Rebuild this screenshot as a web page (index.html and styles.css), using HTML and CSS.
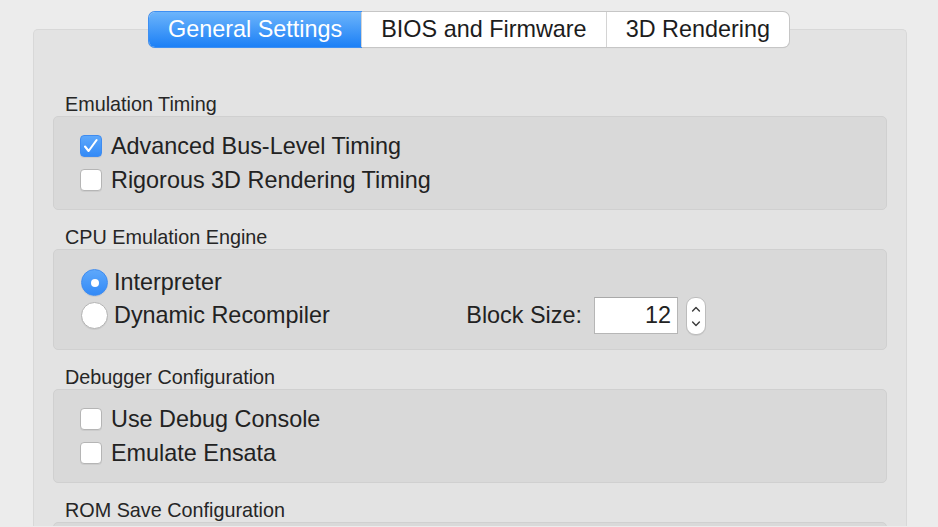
FILE: index.html
```html
<!DOCTYPE html>
<html lang="en">
<head>
    <meta charset="UTF-8">
    <meta name="viewport" content="width=device-width, initial-scale=1.0">
    <title>Emulator Settings</title>
    <link rel="stylesheet" href="styles.css">
</head>
<body>
<div class="tabs">
    <span class="tab selected">General Settings</span>
    <span class="tab">BIOS and Firmware</span>
    <span class="tab">3D Rendering</span>
</div>

<div class="panel">
    <div class="group-title">Emulation Timing</div>
    <div class="group">
        <div class="row">
            <span class="check on">
                <svg width="20" height="20" viewBox="0 0 20 20"><path d="M4 10.5 L7.6 15 L15.6 4" fill="none" stroke="#fff" stroke-width="2.1" stroke-linecap="round" stroke-linejoin="round"/></svg>
            </span>
            Advanced Bus-Level Timing
        </div>
        <div class="row"><span class="check"></span>Rigorous 3D Rendering Timing</div>
    </div>

    <div class="group-title">CPU Emulation Engine</div>
    <div class="group cpu">
        <div class="row short"><span class="radio on"></span>Interpreter</div>
        <div class="row short">
            <span class="radio"></span>Dynamic Recompiler
            <div class="block-size">
                <span class="block-label">Block Size:</span>
                <span class="number-field">12</span>
                <span class="stepper">
                    <svg width="18" height="36" viewBox="0 0 18 36"><path d="M5.6 13 L9 9.6 L12.4 13 M5.6 24 L9 27.4 L12.4 24" fill="none" stroke="#3a3a3a" stroke-width="1.4" stroke-linecap="round" stroke-linejoin="round"/></svg>
                </span>
            </div>
        </div>
    </div>

    <div class="group-title">Debugger Configuration</div>
    <div class="group">
        <div class="row"><span class="check"></span>Use Debug Console</div>
        <div class="row"><span class="check"></span>Emulate Ensata</div>
    </div>

    <div class="group-title">ROM Save Configuration</div>
    <div class="group rom"></div>
</div>
</body>
</html>
```

FILE: styles.css
```css
body {
    margin: 0;
    height: 527px;
    overflow: hidden;
    background-color: #ececec;
    font-family: "Liberation Sans", Arial, sans-serif;
    color: #222;
}
.tabs {
    position: relative;
    z-index: 1;
    display: flex;
    width: max-content;
    height: 35px;
    margin: 12px auto 0;
    background-color: #fff;
    border-radius: 6px;
    box-shadow: 0 0 0 1px #c6c6c6, 0 1px 1px rgba(0, 0, 0, 0.12);
}
.tab {
    padding: 0 19px;
    font-size: 23.4px;
    line-height: 35px;
    color: #1c1c1c;
    border-left: 1px solid #d4d4d4;
}
.tab:first-child {
    border-left: none;
}
.tab.selected {
    color: #fff;
    background: linear-gradient(#6cb4fb, #1c80f6);
    border-radius: 6px 0 0 6px;
    box-shadow: 0 0 0 1px #3d8ff3;
}
.panel {
    height: 434px;
    overflow: hidden;
    margin: -18px 31px 0 33px;
    padding: 62px 19px 0;
    background-color: #e3e3e3;
    border: 1px solid #d8d8d8;
    border-bottom: none;
    border-radius: 5px 5px 0 0;
}
.group-title {
    padding-left: 12px;
    font-size: 19.8px;
    line-height: 24px;
    color: #262626;
}
.group {
    margin-bottom: 15px;
    padding: 12px 0 12px 26px;
    background-color: #d9d9d9;
    border: 1px solid #d0d0d0;
    border-radius: 5px;
}
.group.cpu {
    padding: 16px 180px 17px 27px;
}
.group.rom {
    height: 80px;
}
.row {
    display: flex;
    align-items: center;
    height: 34px;
    font-size: 23.4px;
}
.row.short {
    height: 33px;
}
.check {
    display: flex;
    align-items: center;
    justify-content: center;
    box-sizing: border-box;
    width: 22px;
    height: 22px;
    margin-right: 9px;
    background-color: #fff;
    border: 1px solid #b5b5b5;
    border-radius: 4px;
    box-shadow: 0 1px 0 rgba(0, 0, 0, 0.06);
}
.check.on {
    background: linear-gradient(#5ea8fb, #338af7);
    border-color: #3f8cf0;
}
.radio {
    display: flex;
    align-items: center;
    justify-content: center;
    box-sizing: border-box;
    width: 27px;
    height: 27px;
    margin-right: 6px;
    background-color: #fff;
    border: 1px solid #b3b3b3;
    border-radius: 50%;
    box-shadow: 0 1px 0 rgba(0, 0, 0, 0.06);
}
.radio.on {
    background: linear-gradient(#5ea8fb, #338af7);
    border-color: #3f8cf0;
}
.radio.on::after {
    content: "";
    width: 8px;
    height: 8px;
    background-color: #fff;
    border-radius: 50%;
}
.block-size {
    display: flex;
    align-items: center;
    margin-left: auto;
}
.block-label {
    margin-right: 12px;
}
.number-field {
    box-sizing: border-box;
    width: 84px;
    height: 37px;
    padding-right: 6px;
    line-height: 35px;
    text-align: right;
    background-color: #fff;
    border: 1px solid #b6b6b6;
    border-top-color: #a9a9a9;
}
.stepper {
    display: flex;
    box-sizing: border-box;
    width: 20px;
    height: 38px;
    margin-left: 8px;
    background-color: #fff;
    border: 1px solid #bcbcbc;
    border-radius: 9px;
    box-shadow: 0 1px 0 rgba(0, 0, 0, 0.06);
}
```
